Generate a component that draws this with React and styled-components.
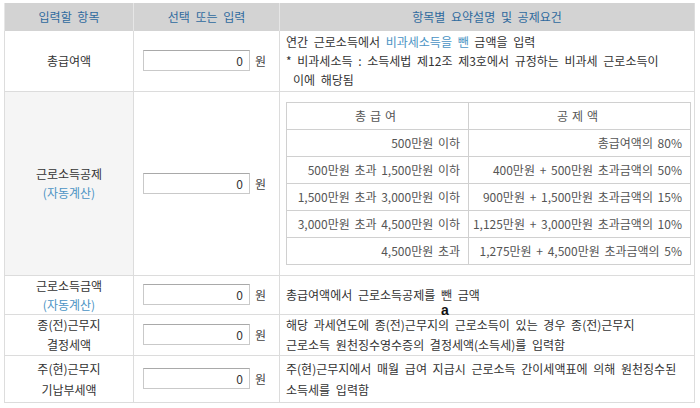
import React from 'react'
import styled, { createGlobalStyle } from 'styled-components'

const GlobalStyle = createGlobalStyle`
    body {
        margin: 0;
        background: #fff;
        font-family: "Noto Sans CJK KR", "Noto Sans", sans-serif;
        font-size: 12px;
        word-spacing: 3px;
        color: #333;
    }
`

const Page = styled.div`
    padding: 3px 5px 0 4px;
`

const Table = styled.table`
    width: 691px;
    border-collapse: collapse;
    table-layout: fixed;
    border-left: 1px solid #ddd;
    border-right: 1px solid #ddd;
`

const HeadCell = styled.th`
    height: 28px;
    padding: 0;
    background: #d3d3d3;
    color: #2f6a9e;
    font-weight: normal;
    text-align: center;
    border-left: 1px solid #e6e6e6;
    line-height: 28px;
`

const Row = styled.tr`
    height: ${(p) => p.h}px;
    border-bottom: 1px solid #dcdcdc;
`

const LabelCell = styled.td`
    padding: 0;
    text-align: center;
    vertical-align: middle;
    line-height: ${(p) => p.lh || 19}px;
    background: ${(p) => (p.shaded ? '#f5f5f5' : '#fff')};
    border-right: 1px solid #dcdcdc;
`

const InputCell = styled.td`
    padding: 0 0 0 9px;
    vertical-align: middle;
    border-right: 1px solid #dcdcdc;
    white-space: nowrap;
`

const DescCell = styled.td`
    position: relative;
    padding: 0 6px;
    vertical-align: middle;
    line-height: ${(p) => p.lh || 19}px;
    color: #333;
`

const AmountInput = styled.input`
    box-sizing: border-box;
    width: 107px;
    height: 21px;
    border: 1px solid #c9c9c9;
    border-top-color: #a9a9a9;
    padding: 0 6px;
    text-align: right;
    font-family: inherit;
    font-size: 12px;
    color: #333;
    vertical-align: middle;
`

const Unit = styled.span`
    margin-left: 5px;
    vertical-align: middle;
    color: #444;
`

const Blue = styled.span`
    color: #4a93c4;
`

const Indent = styled.div`
    padding-left: 7px;
`

const SubTable = styled.table`
    width: 405px;
    margin: 10px 0 10px 0;
    border-collapse: collapse;
    table-layout: fixed;
    border: 1px solid #d0d0d0;
    word-spacing: 2px;
`

const SubHead = styled.th`
    height: 26px;
    padding: 0;
    font-weight: normal;
    color: #555;
    letter-spacing: 4px;
    border: 1px solid #d0d0d0;
`

const SubCell = styled.td`
    height: 26px;
    padding: 0 8px 0 0;
    text-align: right;
    color: #555;
    border: 1px solid #d0d0d0;
    white-space: nowrap;
`

const Stray = styled.span`
    position: absolute;
    left: 161px;
    top: 29px;
    font-family: "Liberation Sans", sans-serif;
    font-size: 14px;
    font-weight: bold;
    line-height: 10px;
    color: #111;
`

const deductions = [
    ['500만원 이하', '총급여액의 80%'],
    ['500만원 초과 1,500만원 이하', '400만원 + 500만원 초과금액의 50%'],
    ['1,500만원 초과 3,000만원 이하', '900만원 + 1,500만원 초과금액의 15%'],
    ['3,000만원 초과 4,500만원 이하', '1,125만원 + 3,000만원 초과금액의 10%'],
    ['4,500만원 초과', '1,275만원 + 4,500만원 초과금액의 5%'],
]

function Amount() {
    return (
        <>
            <AmountInput type="text" defaultValue="0" />
            <Unit>원</Unit>
        </>
    )
}

export default function App() {
    return (
        <Page>
            <GlobalStyle />
            <Table>
                <colgroup>
                    <col style={{ width: 129 }} />
                    <col style={{ width: 146 }} />
                    <col />
                </colgroup>
                <thead>
                    <tr>
                        <HeadCell>입력할 항목</HeadCell>
                        <HeadCell>선택 또는 입력</HeadCell>
                        <HeadCell>항목별 요약설명 및 공제요건</HeadCell>
                    </tr>
                </thead>
                <tbody>
                    <Row h={60}>
                        <LabelCell>총급여액</LabelCell>
                        <InputCell><Amount /></InputCell>
                        <DescCell>
                            연간 근로소득에서 <Blue>비과세소득을 뺀</Blue> 금액을 입력<br />
                            * 비과세소득 : 소득세법 제12조 제3호에서 규정하는 비과세 근로소득이
                            <Indent>이에 해당됨</Indent>
                        </DescCell>
                    </Row>
                    <Row h={184}>
                        <LabelCell shaded>
                            근로소득공제<br />
                            <Blue>(자동계산)</Blue>
                        </LabelCell>
                        <InputCell><Amount /></InputCell>
                        <DescCell>
                            <SubTable>
                                <colgroup>
                                    <col style={{ width: 182 }} />
                                    <col />
                                </colgroup>
                                <thead>
                                    <tr>
                                        <SubHead>총급여</SubHead>
                                        <SubHead>공제액</SubHead>
                                    </tr>
                                </thead>
                                <tbody>
                                    {deductions.map(([range, amount]) => (
                                        <tr key={range}>
                                            <SubCell>{range}</SubCell>
                                            <SubCell>{amount}</SubCell>
                                        </tr>
                                    ))}
                                </tbody>
                            </SubTable>
                        </DescCell>
                    </Row>
                    <Row h={37}>
                        <LabelCell>
                            근로소득금액<br />
                            <Blue>(자동계산)</Blue>
                        </LabelCell>
                        <InputCell><Amount /></InputCell>
                        <DescCell>
                            총급여액에서 근로소득공제를 뺀 금액
                            <Stray>a</Stray>
                        </DescCell>
                    </Row>
                    <Row h={40}>
                        <LabelCell lh={20}>
                            종(전)근무지<br />
                            결정세액
                        </LabelCell>
                        <InputCell><Amount /></InputCell>
                        <DescCell lh={20}>
                            해당 과세연도에 종(전)근무지의 근로소득이 있는 경우 종(전)근무지<br />
                            근로소득 원천징수영수증의 결정세액(소득세)를 입력함
                        </DescCell>
                    </Row>
                    <Row h={47}>
                        <LabelCell lh={21}>
                            주(현)근무지<br />
                            기납부세액
                        </LabelCell>
                        <InputCell><Amount /></InputCell>
                        <DescCell lh={21}>
                            주(현)근무지에서 매월 급여 지급시 근로소득 간이세액표에 의해 원천징수된<br />
                            소득세를 입력함
                        </DescCell>
                    </Row>
                </tbody>
            </Table>
        </Page>
    )
}
